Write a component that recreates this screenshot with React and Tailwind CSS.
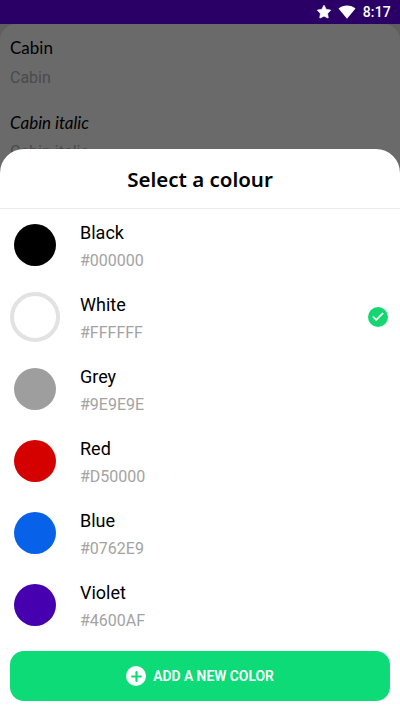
import { Star, Check, Plus } from 'lucide-react';

const colours = [
  { name: 'Black', hex: '#000000', swatch: 'bg-[#000000]' },
  { name: 'White', hex: '#FFFFFF', swatch: 'bg-white', selected: true },
  { name: 'Grey', hex: '#9E9E9E', swatch: 'bg-[#9e9e9e]' },
  { name: 'Red', hex: '#D50000', swatch: 'bg-[#d50000]' },
  { name: 'Blue', hex: '#0762E9', swatch: 'bg-[#0762e9]' },
  { name: 'Violet', hex: '#4600AF', swatch: 'bg-[#4600af]' },
];

const ColourRow = ({ colour }) => (
  <div className="h-[72px] flex items-center">
    <div className="w-[70px] flex items-center justify-center">
      {colour.selected ? (
        <div className="w-[50px] h-[50px] rounded-full bg-white border-[4px] border-[#e2e2e2]"></div>
      ) : (
        <div className={`w-[42px] h-[42px] rounded-full ${colour.swatch}`}></div>
      )}
    </div>
    <div className="ml-[10px] flex-1 flex flex-col pt-[4px]">
      <span className="text-[18px] leading-[24px] text-black">{colour.name}</span>
      <span className="text-[16px] leading-[24px] mt-[4px] text-[#a3a3a3]">{colour.hex}</span>
    </div>
    {colour.selected && (
      <div className="mr-[12px] w-[20px] h-[20px] rounded-full bg-[#16d672] flex items-center justify-center">
        <Check size={14} strokeWidth={3} className="text-white" />
      </div>
    )}
  </div>
);

export default function App() {
  return (
    <div className="relative w-[400px] h-[711px] overflow-hidden bg-[#5f5f5f] font-['Roboto',sans-serif]">
      <div className="h-6 bg-[#2a0066] flex items-center justify-end pr-[9px] text-white">
        <Star size={16} fill="currentColor" strokeWidth={1} />
        <svg width="18" height="14" viewBox="0 0 18 14" className="ml-[6px]">
          <path d="M0.5 3.5C5 -0.6 13 -0.6 17.5 3.5L9 13.8Z" fill="currentColor" />
        </svg>
        <span className="ml-[7px] text-[14px] font-medium tracking-[0.2px]">8:17</span>
      </div>

      <div className="h-[687px] bg-[#6a6a6a] rounded-t-[16px] pl-[10px] pt-[12px] font-['Lato',sans-serif]">
        <div className="text-[17px] leading-[24px] text-black">Cabin</div>
        <div className="mt-[6px] text-[16px] leading-[24px] text-[#4a4a4a] font-['Roboto',sans-serif]">Cabin</div>
        <div className="mt-[21px] text-[17px] leading-[24px] italic text-black">Cabin italic</div>
        <div className="mt-[5px] text-[16px] leading-[24px] text-[#4a4a4a] font-['Roboto',sans-serif]">Cabin italic</div>
      </div>

      <div className="absolute left-0 right-0 bottom-0 h-[562px] bg-white rounded-t-[24px] flex flex-col">
        <div className="h-[60px] shrink-0 border-b border-[#ececec] flex items-center justify-center">
          <span className="font-['Noto_Sans',sans-serif] font-semibold text-[20.5px] leading-[32px] pt-[1px] text-black">Select a colour</span>
        </div>
        <div className="flex flex-col">
          {colours.map((colour) => (
            <ColourRow key={colour.name} colour={colour} />
          ))}
        </div>
        <button className="mx-[10px] mt-[10px] h-[50px] rounded-[14px] bg-[#0ddb78] flex items-center justify-center text-white">
          <span className="w-[20px] h-[20px] rounded-full bg-white flex items-center justify-center">
            <Plus size={15} strokeWidth={3.5} className="text-[#0ddb78]" />
          </span>
          <span className="ml-[7px] text-[13.85px] font-semibold">ADD A NEW COLOR</span>
        </button>
      </div>
    </div>
  );
}
